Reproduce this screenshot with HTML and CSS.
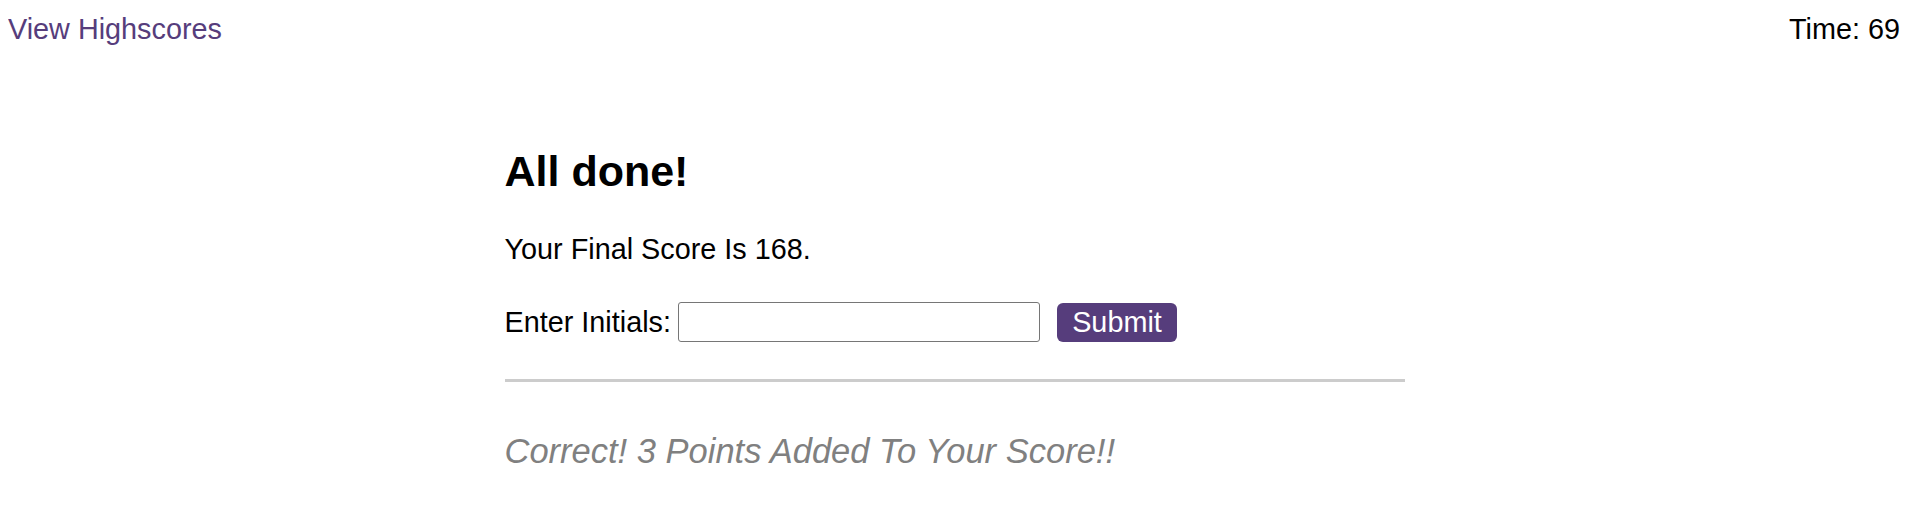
FILE: index.html
```html
<!DOCTYPE html>
<html lang="en">
<head>
<meta charset="utf-8">
<title>Quiz</title>
<link rel="stylesheet" href="styles.css">
</head>
<body>
<header class="topbar">
  <a class="scores-link" href="#">View Highscores</a>
  <div class="timer">Time: 69</div>
</header>
<main class="quiz">
  <h1 class="title">All done!</h1>
  <p class="final">Your Final Score Is 168.</p>
  <form class="initials-form">
    <label class="initials-label" for="initials">Enter Initials:</label>
    <input class="initials-input" id="initials" type="text">
    <button class="submit-btn" type="button">Submit</button>
  </form>
  <hr class="divider">
  <p class="feedback">Correct! 3 Points Added To Your Score!!</p>
</main>
</body>
</html>
```
FILE: styles.css
```css
body {
  margin: 8px;
  font-family: Arial, "Liberation Sans", sans-serif;
  color: #000;
  background: #fff;
}

.topbar {
  display: flex;
  justify-content: space-between;
  align-items: baseline;
  padding-top: 5px;
  font-size: 28.8px;
  line-height: 33px;
}

.scores-link {
  color: #563d7c;
  text-decoration: none;
}

.timer {
  margin-right: 1px;
}

.quiz {
  width: 900px;
  margin: 101px auto 0;
}

.title {
  margin: 0;
  font-size: 43px;
  line-height: 49px;
  font-weight: bold;
}

.final {
  margin: 37px 0 0;
  font-size: 28.8px;
  line-height: 33px;
}

.initials-form {
  display: flex;
  align-items: center;
  gap: 7px;
  margin-top: 36px;
  height: 40px;
}

.initials-label {
  font-size: 28.8px;
  line-height: 33px;
}

.initials-input {
  box-sizing: border-box;
  width: 362px;
  height: 40px;
  margin: 0;
  padding: 0 4px;
  border: 1px solid #767676;
  border-radius: 3px;
  font-family: inherit;
  font-size: 24px;
  background: #fff;
}

.submit-btn {
  box-sizing: border-box;
  width: 120px;
  height: 39px;
  margin: 0 0 0 10px;
  padding: 0;
  border: none;
  border-radius: 6px;
  background: #563d7c;
  color: #fff;
  font-family: inherit;
  font-size: 28.8px;
  line-height: 33px;
  cursor: pointer;
}

.divider {
  margin: 37px 0 0;
  height: 3px;
  border: none;
  background: #cccccc;
}

.feedback {
  margin: 49px 0 0;
  font-size: 34.5px;
  line-height: 40px;
  font-style: italic;
  color: #808080;
}
```
